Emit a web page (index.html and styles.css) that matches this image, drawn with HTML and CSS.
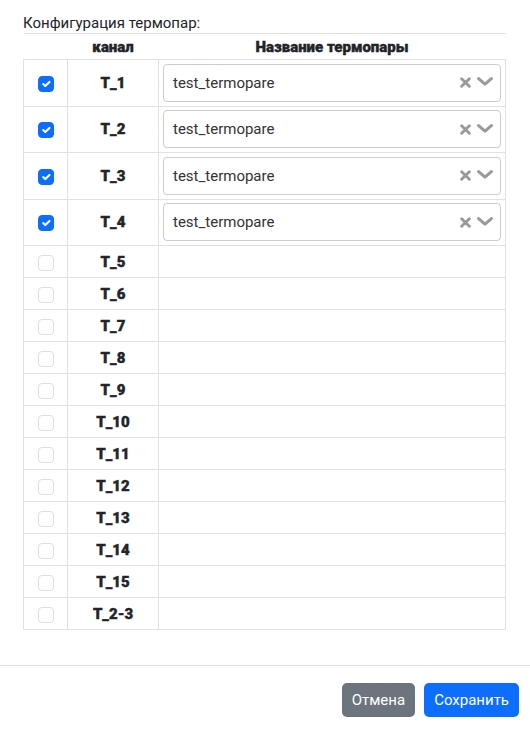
FILE: index.html
```html
<!DOCTYPE html>
<html lang="ru">
<head>
<meta charset="utf-8">
<title>Конфигурация термопар</title>
<link rel="stylesheet" href="styles.css">
</head>
<body>
<div class="modal-body">
  <div class="title">Конфигурация термопар:</div>
  <table class="tc-table">
    <colgroup><col class="c1"><col class="c2"><col class="c3"></colgroup>
    <thead>
      <tr><th></th><th>канал</th><th>Название термопары</th></tr>
    </thead>
    <tbody>
      <tr class="big"><td><span class="cb checked"><svg viewBox="0 0 20 20"><path d="m6 10 3 3 6-6"/></svg></span></td><td class="ch">T_1</td><td class="sel-cell"><div class="select"><span class="val">test_termopare</span><span class="ind"><svg class="x" viewBox="0 0 10 10"><path d="M1.5 1.5 8.5 8.5M8.5 1.5 1.5 8.5"/></svg><svg class="chev" viewBox="0 0 16 9"><path d="M1.6 1.6 8 7.2 14.4 1.6"/></svg></span></div></td></tr>
      <tr class="big"><td><span class="cb checked"><svg viewBox="0 0 20 20"><path d="m6 10 3 3 6-6"/></svg></span></td><td class="ch">T_2</td><td class="sel-cell"><div class="select"><span class="val">test_termopare</span><span class="ind"><svg class="x" viewBox="0 0 10 10"><path d="M1.5 1.5 8.5 8.5M8.5 1.5 1.5 8.5"/></svg><svg class="chev" viewBox="0 0 16 9"><path d="M1.6 1.6 8 7.2 14.4 1.6"/></svg></span></div></td></tr>
      <tr class="big"><td><span class="cb checked"><svg viewBox="0 0 20 20"><path d="m6 10 3 3 6-6"/></svg></span></td><td class="ch">T_3</td><td class="sel-cell"><div class="select"><span class="val">test_termopare</span><span class="ind"><svg class="x" viewBox="0 0 10 10"><path d="M1.5 1.5 8.5 8.5M8.5 1.5 1.5 8.5"/></svg><svg class="chev" viewBox="0 0 16 9"><path d="M1.6 1.6 8 7.2 14.4 1.6"/></svg></span></div></td></tr>
      <tr class="big"><td><span class="cb checked"><svg viewBox="0 0 20 20"><path d="m6 10 3 3 6-6"/></svg></span></td><td class="ch">T_4</td><td class="sel-cell"><div class="select"><span class="val">test_termopare</span><span class="ind"><svg class="x" viewBox="0 0 10 10"><path d="M1.5 1.5 8.5 8.5M8.5 1.5 1.5 8.5"/></svg><svg class="chev" viewBox="0 0 16 9"><path d="M1.6 1.6 8 7.2 14.4 1.6"/></svg></span></div></td></tr>
      <tr><td><span class="cb"></span></td><td class="ch">T_5</td><td></td></tr>
      <tr><td><span class="cb"></span></td><td class="ch">T_6</td><td></td></tr>
      <tr><td><span class="cb"></span></td><td class="ch">T_7</td><td></td></tr>
      <tr><td><span class="cb"></span></td><td class="ch">T_8</td><td></td></tr>
      <tr><td><span class="cb"></span></td><td class="ch">T_9</td><td></td></tr>
      <tr><td><span class="cb"></span></td><td class="ch">T_10</td><td></td></tr>
      <tr><td><span class="cb"></span></td><td class="ch">T_11</td><td></td></tr>
      <tr><td><span class="cb"></span></td><td class="ch">T_12</td><td></td></tr>
      <tr><td><span class="cb"></span></td><td class="ch">T_13</td><td></td></tr>
      <tr><td><span class="cb"></span></td><td class="ch">T_14</td><td></td></tr>
      <tr><td><span class="cb"></span></td><td class="ch">T_15</td><td></td></tr>
      <tr><td><span class="cb"></span></td><td class="ch">T_2-3</td><td></td></tr>
    </tbody>
  </table>
</div>
<div class="modal-footer">
  <button class="btn btn-secondary">Отмена</button>
  <button class="btn btn-primary">Сохранить</button>
</div>
</body>
</html>
```

FILE: styles.css
```css
html, body {
  margin: 0;
  padding: 0;
  background: #fff;
}
body {
  font-family: Roboto, "Liberation Sans", sans-serif;
  font-size: 15px;
  color: #212529;
  width: 530px;
  height: 731px;
  overflow: hidden;
}
.modal-body {
  padding: 13px 24px 35px 23px;
}
.title {
  line-height: 20px;
  height: 20px;
}
.tc-table {
  width: 483px;
  border-collapse: collapse;
  table-layout: fixed;
}
.c1 { width: 44px; }
.c2 { width: 91px; }
.tc-table thead th {
  border-top: 1px solid #dee2e6;
  border-bottom: 1px solid #dee2e6;
  height: 25px;
  padding: 0;
  font-family: Roboto, "Liberation Sans", sans-serif;
  font-weight: 900;
  font-size: 15px;
  -webkit-text-stroke: 0.4px #212529;
  text-align: center;
  vertical-align: middle;
  color: #212529;
}
.tc-table tbody td {
  border: 1px solid #dee2e6;
  padding: 0;
  height: 31px;
  text-align: center;
  vertical-align: middle;
}
.tc-table tbody tr.big td {
  height: 45.5px;
}
.tc-table td.ch {
  font-family: Roboto, "Liberation Sans", sans-serif;
  font-weight: 900;
  font-size: 15px;
  -webkit-text-stroke: 0.4px #212529;
  color: #212529;
}
.cb {
  display: inline-block;
  box-sizing: border-box;
  width: 16px;
  height: 16px;
  border: 1px solid #dcdfe3;
  border-radius: 4px;
  vertical-align: middle;
  background: #fff;
}
.cb.checked {
  background: #0d6efd;
  border-color: #0d6efd;
}
.cb svg {
  display: block;
  width: 14px;
  height: 14px;
  fill: none;
  stroke: #fff;
  stroke-width: 3;
  stroke-linecap: round;
  stroke-linejoin: round;
}
.tc-table td.sel-cell {
  padding: 0 4px;
  text-align: left;
}
.select {
  box-sizing: border-box;
  height: 38px;
  border: 1px solid #cccccc;
  border-radius: 4px;
  display: flex;
  align-items: center;
  padding: 0 7px 0 9px;
  background: #fff;
}
.val {
  flex: 1;
  font-size: 15px;
  color: #333;
}
.ind {
  display: flex;
  align-items: center;
  gap: 6px;
}
.ind svg {
  fill: none;
  stroke: #999;
  stroke-linecap: round;
  stroke-linejoin: round;
}
.ind .x {
  width: 11px;
  height: 11px;
  stroke-width: 2.6;
}
.ind .chev {
  width: 16px;
  height: 9px;
  stroke-width: 3;
  margin-top: -2px;
}
.modal-footer {
  border-top: 1px solid #dee2e6;
  display: flex;
  justify-content: flex-end;
  gap: 9px;
  padding: 17px 11px 0 0;
}
.btn {
  font-family: Roboto, "Liberation Sans", sans-serif;
  font-size: 15px;
  height: 34px;
  padding: 0 10px;
  border: none;
  border-radius: 5px;
  color: #fff;
}
.btn-secondary { background: #6c757d; }
.btn-primary { background: #0d6efd; }
```
